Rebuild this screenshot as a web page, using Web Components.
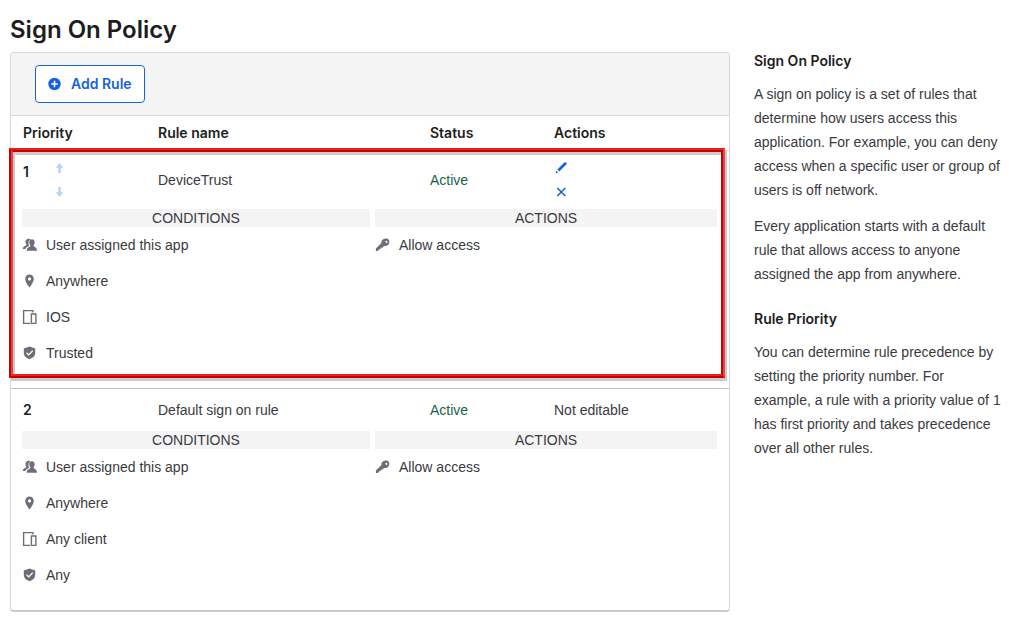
<!DOCTYPE html>
<html lang="en">
<head>
<meta charset="utf-8">
<title>Sign On Policy</title>
<style>
  body { margin: 0; background: #fff; color: #1d1d21; font: 14px/24px "Liberation Sans", Arial, sans-serif; --heading-font: Inter, "Liberation Sans", sans-serif; }
</style>
</head>
<body>
<policy-page>
  <policy-table></policy-table>
  <policy-help slot="aside" heading="Sign On Policy">
    <p>A sign on policy is a set of rules that determine how users access this application. For example, you can deny access when a specific user or group of users is off network.</p>
    <p>Every application starts with a default rule that allows access to anyone assigned the app from anywhere.</p>
  </policy-help>
  <policy-help slot="aside" heading="Rule Priority">
    <p>You can determine rule precedence by setting the priority number. For example, a rule with a priority value of 1 has first priority and takes precedence over all other rules.</p>
  </policy-help>
</policy-page>
<script>
const ICONS = {
  plus: '<circle cx="7.500" cy="8" r="6.200"/><path d="M7.500 4.700v6.600M4.200 8h6.600" stroke="#fff" stroke-width="1.500"/>',
  up: '<path d="M7.500 3l3.800 4.700H8.700V13H6.300V7.700H3.700z"/>',
  down: '<path d="M7.500 13l3.800-4.700H8.700V3H6.300v5.300H3.700z"/>',
  pencil: '<path d="M3.400 9.600l7-7q1-.9 1.900 0t0 1.900l-7 7zM2.400 10.700l1.800 1.800-2.600 1z"/>',
  close: '<path d="M3.300 4l8 8M11.300 4l-8 8" fill="none" stroke="currentColor" stroke-width="1.600"/>',
  users: '<path d="M5.500 2C7 1.400 8.300 2 8.400 2.600 6.400 3.600 6 6 6.900 8.200V9L4.600 10.200Q3.700 10.700 3.400 12H.8q0-2 1.200-2.600L4.300 8.200V7.300Q3.300 6 3.400 4.500 3.600 2.600 5.500 2z"/><path d="M9.900 2.300c1.900 0 2.800 1.300 2.700 3.200q0 1.600-.9 2.700v1.100l2 1.100Q15 11.200 15 13.800H4.600q0-2.600 1.500-3.300l2.200-1.200V8.200Q7.300 7.100 7.300 5.500C7.200 3.600 8.100 2.300 9.900 2.300z"/>',
  pin: '<path fill-rule="evenodd" d="M7.500 1.600a4.300 4.300 0 0 1 4.300 4.300c0 3.200-4.300 8.500-4.300 8.500S3.200 9.100 3.200 5.900a4.300 4.300 0 0 1 4.300-4.300zm0 2.700a1.600 1.600 0 1 0 0 3.200 1.600 1.600 0 0 0 0-3.200z"/>',
  device: '<path d="M11 3.500V1.600H1.600v12.800H8M9.400 5h4.500v9.400H9.400z" fill="none" stroke="currentColor" stroke-width="1.400"/>',
  shield: '<path d="M7.500 1.600l5.700 1.800v4.400q0 4.600-5.700 6.400Q1.800 12.400 1.800 7.800V3.400z"/><path d="M4.600 7.800l2.100 2.100 4-4.100" fill="none" stroke="#fff" stroke-width="1.300"/>',
  key: '<path fill-rule="evenodd" d="M7 3.300q2-2.500 4.900-1.700 2.700 1 2.400 3.800-.6 3.200-3.300 3.700l-2-.1-1.600 1.800H5.700v1.500H4.200L2.800 13.900H.9v-2.500l5.500-5.300q-.2-1.600.6-2.800zm4.200.3a1.100 1.100 0 1 0 1.400 1.400z"/>'
};

class PolicyIcon extends HTMLElement {
  constructor() {
    super();
    this.attachShadow({ mode: 'open' }).innerHTML = `
      <style>
        :host { display: block; flex: none; width: 16px; height: 16px; }
        svg { display: block; fill: currentColor; }
      </style>
      <svg width="16" height="16" viewBox="0 0 16 16" aria-hidden="true">${ICONS[this.getAttribute('name')]}</svg>`;
  }
}
customElements.define('policy-icon', PolicyIcon);

class PolicyPage extends HTMLElement {
  constructor() {
    super();
    this.attachShadow({ mode: 'open' }).innerHTML = `
      <style>
        :host { display: block; padding: 12px 10px 20px; }
        h1 { margin: 0 0 4px; font: 600 24px/36px var(--heading-font); }
        .columns { display: grid; grid-template-columns: minmax(0, 1fr) 258px; gap: 24px; align-items: start; }
        aside { display: grid; gap: 24px; padding-right: 9px; }
      </style>
      <h1>Sign On Policy</h1>
      <div class="columns">
        <main><slot></slot></main>
        <aside><slot name="aside"></slot></aside>
      </div>`;
  }
}
customElements.define('policy-page', PolicyPage);

class PolicyHelp extends HTMLElement {
  constructor() {
    super();
    this.attachShadow({ mode: 'open' }).innerHTML = `
      <style>
        :host { display: block; }
        h2 { margin: 0 0 12px; font: 600 14px/18px var(--heading-font); }
        .text { display: grid; gap: 12px; color: #3a3a40; }
        ::slotted(p) { margin: 0; }
      </style>
      <h2>${this.getAttribute('heading')}</h2>
      <div class="text"><slot></slot></div>`;
  }
}
customElements.define('policy-help', PolicyHelp);

class RuleItem extends HTMLElement {
  constructor() {
    super();
    this.attachShadow({ mode: 'open' }).innerHTML = `
      <style>
        :host { display: flex; align-items: center; gap: 8px; }
        policy-icon { color: #6e6e78; }
      </style>
      <policy-icon name="${this.getAttribute('icon')}"></policy-icon><span><slot></slot></span>`;
  }
}
customElements.define('rule-item', RuleItem);

class RuleDetails extends HTMLElement {
  constructor() {
    super();
    this.attachShadow({ mode: 'open' }).innerHTML = `
      <style>
        :host { display: grid; grid-template-columns: 348fr 342fr; gap: 5px; padding: 0 12px 23px 11px; }
        h3 { margin: 0 0 6px; background: #f4f4f4; font-size: 14px; line-height: 18px; font-weight: 400; text-align: center; }
        .items { display: grid; gap: 12px; }
      </style>
      <section><h3>CONDITIONS</h3><div class="items"><slot name="condition"></slot></div></section>
      <section><h3>ACTIONS</h3><div class="items"><slot name="action"></slot></div></section>`;
  }
}
customElements.define('rule-details', RuleDetails);

const details = (client, trust) => `
  <rule-details>
    <rule-item slot="condition" icon="users">User assigned this app</rule-item>
    <rule-item slot="condition" icon="pin">Anywhere</rule-item>
    <rule-item slot="condition" icon="device">${client}</rule-item>
    <rule-item slot="condition" icon="shield">${trust}</rule-item>
    <rule-item slot="action" icon="key">Allow access</rule-item>
  </rule-details>`;

class PolicyTable extends HTMLElement {
  constructor() {
    super();
    this.attachShadow({ mode: 'open' }).innerHTML = `
      <style>
        :host { display: block; border: 1px solid #d7d7dc; border-bottom: 2px solid #c9c9cf; border-radius: 4px; color: #3a3a40; }
        .toolbar { display: flex; padding: 12px 24px; background: #f4f4f4; border-bottom: 1px solid #d7d7dc; border-radius: 3px 3px 0 0; }
        button { font: inherit; cursor: pointer; }
        .add { display: flex; align-items: center; gap: 8px; padding: 6px 12px 6px 11px; border: 1px solid #1662dd; border-radius: 4px; background: #fff; color: #1662dd; font-family: var(--heading-font); font-weight: 600; }
        table { width: 100%; border-spacing: 0; table-layout: fixed; }
        .priority { width: 135px; }
        .status { width: 124px; }
        .actions { width: 187px; }
        th, td { padding: 0 0 0 12px; text-align: left; font-weight: 400; box-sizing: border-box; }
        thead th { height: 35px; border-bottom: 1px solid #d7d7dc; color: #1d1d21; font-family: var(--heading-font); font-weight: 600; }
        .summary > * { padding-top: 9px; padding-bottom: 9px; }
        .editable > * { padding-top: 5px; padding-bottom: 5px; }
        .detail td { padding: 0; }
        .first .detail td { border-bottom: 1px solid #c1c1c8; }
        .order { display: flex; gap: 23px; color: #1d1d21; }
        .order b { font-family: var(--heading-font); font-weight: 600; }
        .editable .order b { padding-top: 4px; }
        .active { color: #16634a; }
        .tools { display: grid; justify-content: start; }
        .tools button { padding: 4px 0; border: 0; background: none; color: #1662dd; }
        .order button { color: #b9d1f8; }
        .first { position: relative; }
        .first::before, .first::after { content: ""; position: absolute; border: 2px solid; pointer-events: none; }
        .first::before { inset: -1px 6px 13px 0; border-color: #c80000 #c80000 #e62222 #e84444; box-shadow: inset 2px 3px 0 #cccaca; }
        .first::after { inset: -3px 4px 11px -2px; border-color: #e62222 #e84444 #c80000 #c80000; box-shadow: 2px 3px 0 #cccaca; }
      </style>
      <div class="toolbar"><button class="add" type="button"><policy-icon name="plus"></policy-icon>Add Rule</button></div>
      <table aria-label="Sign on rules">
        <thead><tr>
          <th scope="col" class="priority">Priority</th><th scope="col">Rule name</th>
          <th scope="col" class="status">Status</th><th scope="col" class="actions">Actions</th>
        </tr></thead>
        <tbody class="first">
          <tr class="summary editable">
            <td><div class="order"><b>1</b><div class="tools">
              <button type="button" aria-label="Move up"><policy-icon name="up"></policy-icon></button>
              <button type="button" aria-label="Move down"><policy-icon name="down"></policy-icon></button>
            </div></div></td>
            <th scope="row">DeviceTrust</th>
            <td class="active">Active</td>
            <td><div class="tools">
              <button type="button" aria-label="Edit rule"><policy-icon name="pencil"></policy-icon></button>
              <button type="button" aria-label="Delete rule"><policy-icon name="close"></policy-icon></button>
            </div></td>
          </tr>
          <tr class="detail"><td colspan="4">${details('IOS', 'Trusted')}</td></tr>
        </tbody>
        <tbody>
          <tr class="summary">
            <td><div class="order"><b>2</b></div></td>
            <th scope="row">Default sign on rule</th>
            <td class="active">Active</td>
            <td>Not editable</td>
          </tr>
          <tr class="detail"><td colspan="4">${details('Any client', 'Any')}</td></tr>
        </tbody>
      </table>`;
  }
}
customElements.define('policy-table', PolicyTable);
</script>
</body>
</html>
